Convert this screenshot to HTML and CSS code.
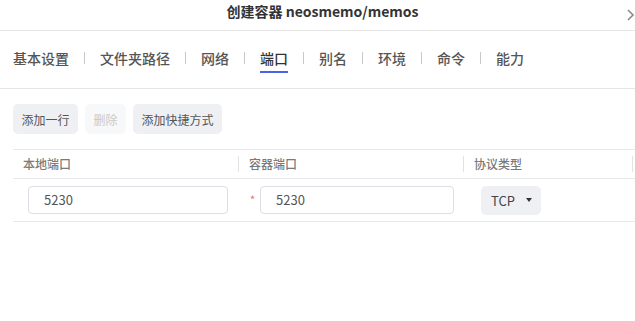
FILE: index.html
```html
<!DOCTYPE html>
<html lang="zh-CN">
<head>
<meta charset="utf-8">
<title>创建容器</title>
<link rel="stylesheet" href="styles.css">
</head>
<body>
<div class="dialog">
  <div class="header">
    <div class="title">创建容器 neosmemo/memos</div>
    <svg class="close" width="10" height="14" viewBox="0 0 10 14"><path d="M3 2 L8 7 L3 12" fill="none" stroke="#8a8a8a" stroke-width="1.6"/></svg>
  </div>
  <div class="tabs">
    <div class="tab">基本设置</div><span class="sep"></span>
    <div class="tab">文件夹路径</div><span class="sep"></span>
    <div class="tab">网络</div><span class="sep"></span>
    <div class="tab active">端口</div><span class="sep"></span>
    <div class="tab">别名</div><span class="sep"></span>
    <div class="tab">环境</div><span class="sep"></span>
    <div class="tab">命令</div><span class="sep"></span>
    <div class="tab">能力</div>
  </div>
  <div class="toolbar">
    <button class="btn">添加一行</button>
    <button class="btn disabled">删除</button>
    <button class="btn">添加快捷方式</button>
  </div>
  <div class="table">
    <div class="thead">
      <div class="th">本地端口</div>
      <div class="th">容器端口</div>
      <div class="th">协议类型</div>
      <div class="th"></div>
    </div>
    <div class="trow">
      <div class="td td1"><div class="input">5230</div></div>
      <div class="td td2"><span class="req">*</span><div class="input input2">5230</div></div>
      <div class="td td3"><div class="select">TCP<span class="caret"></span></div></div>
      <div class="td"></div>
    </div>
  </div>
</div>
</body>
</html>
```
FILE: styles.css
```css
* { box-sizing: border-box; }
html, body { margin: 0; padding: 0; background: #fff; }
body {
  font-family: "Noto Sans CJK SC", "Noto Sans", sans-serif;
  color: #333;
  width: 635px;
  height: 321px;
  overflow: hidden;
}
.header {
  height: 31px;
  border-bottom: 1px solid #e6e6e6;
  display: flex;
  align-items: center;
  justify-content: center;
  padding-left: 10px;
  position: relative;
}
.title {
  font-size: 14px;
  font-weight: 600;
  color: #333;
  line-height: 20px;
  margin-top: -8px;
}
.close {
  position: absolute;
  right: 0;
  top: 8px;
}
.tabs {
  height: 58px;
  border-bottom: 1px solid #e6e6e6;
  display: flex;
  align-items: flex-start;
  padding: 17px 0 0 13px;
}
.tab {
  font-size: 14px;
  line-height: 20px;
  font-weight: 500;
  color: #555;
  padding-bottom: 3px;
  border-bottom: 2px solid transparent;
}
.tab.active {
  color: #333;
  border-bottom-color: #4a63e8;
}
.sep {
  width: 1px;
  height: 12px;
  background: #c8c8c8;
  margin: 4px 15px 0;
}
.toolbar {
  display: flex;
  gap: 7px;
  padding: 15px 0 0 13px;
}
.btn {
  font-family: inherit;
  font-size: 12px;
  height: 30px;
  padding: 0 8.5px;
  border: none;
  border-radius: 5px;
  background: #eff0f4;
  color: #555;
}
.btn.disabled {
  background: #f7f8fa;
  color: #c8c8c8;
}
.table {
  margin: 15px 0 0 13px;
  width: 630px;
  border-top: 1px solid #e8e8e8;
}
.thead, .trow {
  display: grid;
  grid-template-columns: 225px 225px 169px 1fr;
}
.thead {
  height: 29px;
  border-bottom: 1px solid #e8e8e8;
  align-items: center;
}
.th {
  font-size: 12px;
  font-weight: 500;
  color: #7a7a7a;
  line-height: 16px;
  padding-left: 10px;
  border-left: 1px solid #e2e2e2;
}
.th:first-child { border-left: none; }
.th:last-child { height: 16px; }
.trow {
  height: 43px;
  border-bottom: 1px solid #e8e8e8;
  align-items: center;
}
.td { display: flex; align-items: center; }
.td1 { padding-left: 15px; }
.td2 { padding-left: 12px; }
.td3 { padding-left: 18px; }
.input {
  width: 200px;
  height: 28px;
  border: 1px solid #dcdfe6;
  border-radius: 4px;
  font-size: 13px;
  color: #555;
  line-height: 26px;
  padding-left: 15px;
}
.input2 { width: 194px; }
.req {
  color: #f56c6c;
  font-size: 11px;
  width: 10px;
  margin-top: -3px;
}
.select {
  width: 60px;
  height: 29px;
  background: #eff0f4;
  border-radius: 5px;
  font-size: 13px;
  color: #444;
  display: flex;
  align-items: center;
  padding-left: 10px;
}
.caret {
  width: 0;
  height: 0;
  border-left: 3.5px solid transparent;
  border-right: 3.5px solid transparent;
  border-top: 4px solid #333;
  margin-left: 11px;
}
```
